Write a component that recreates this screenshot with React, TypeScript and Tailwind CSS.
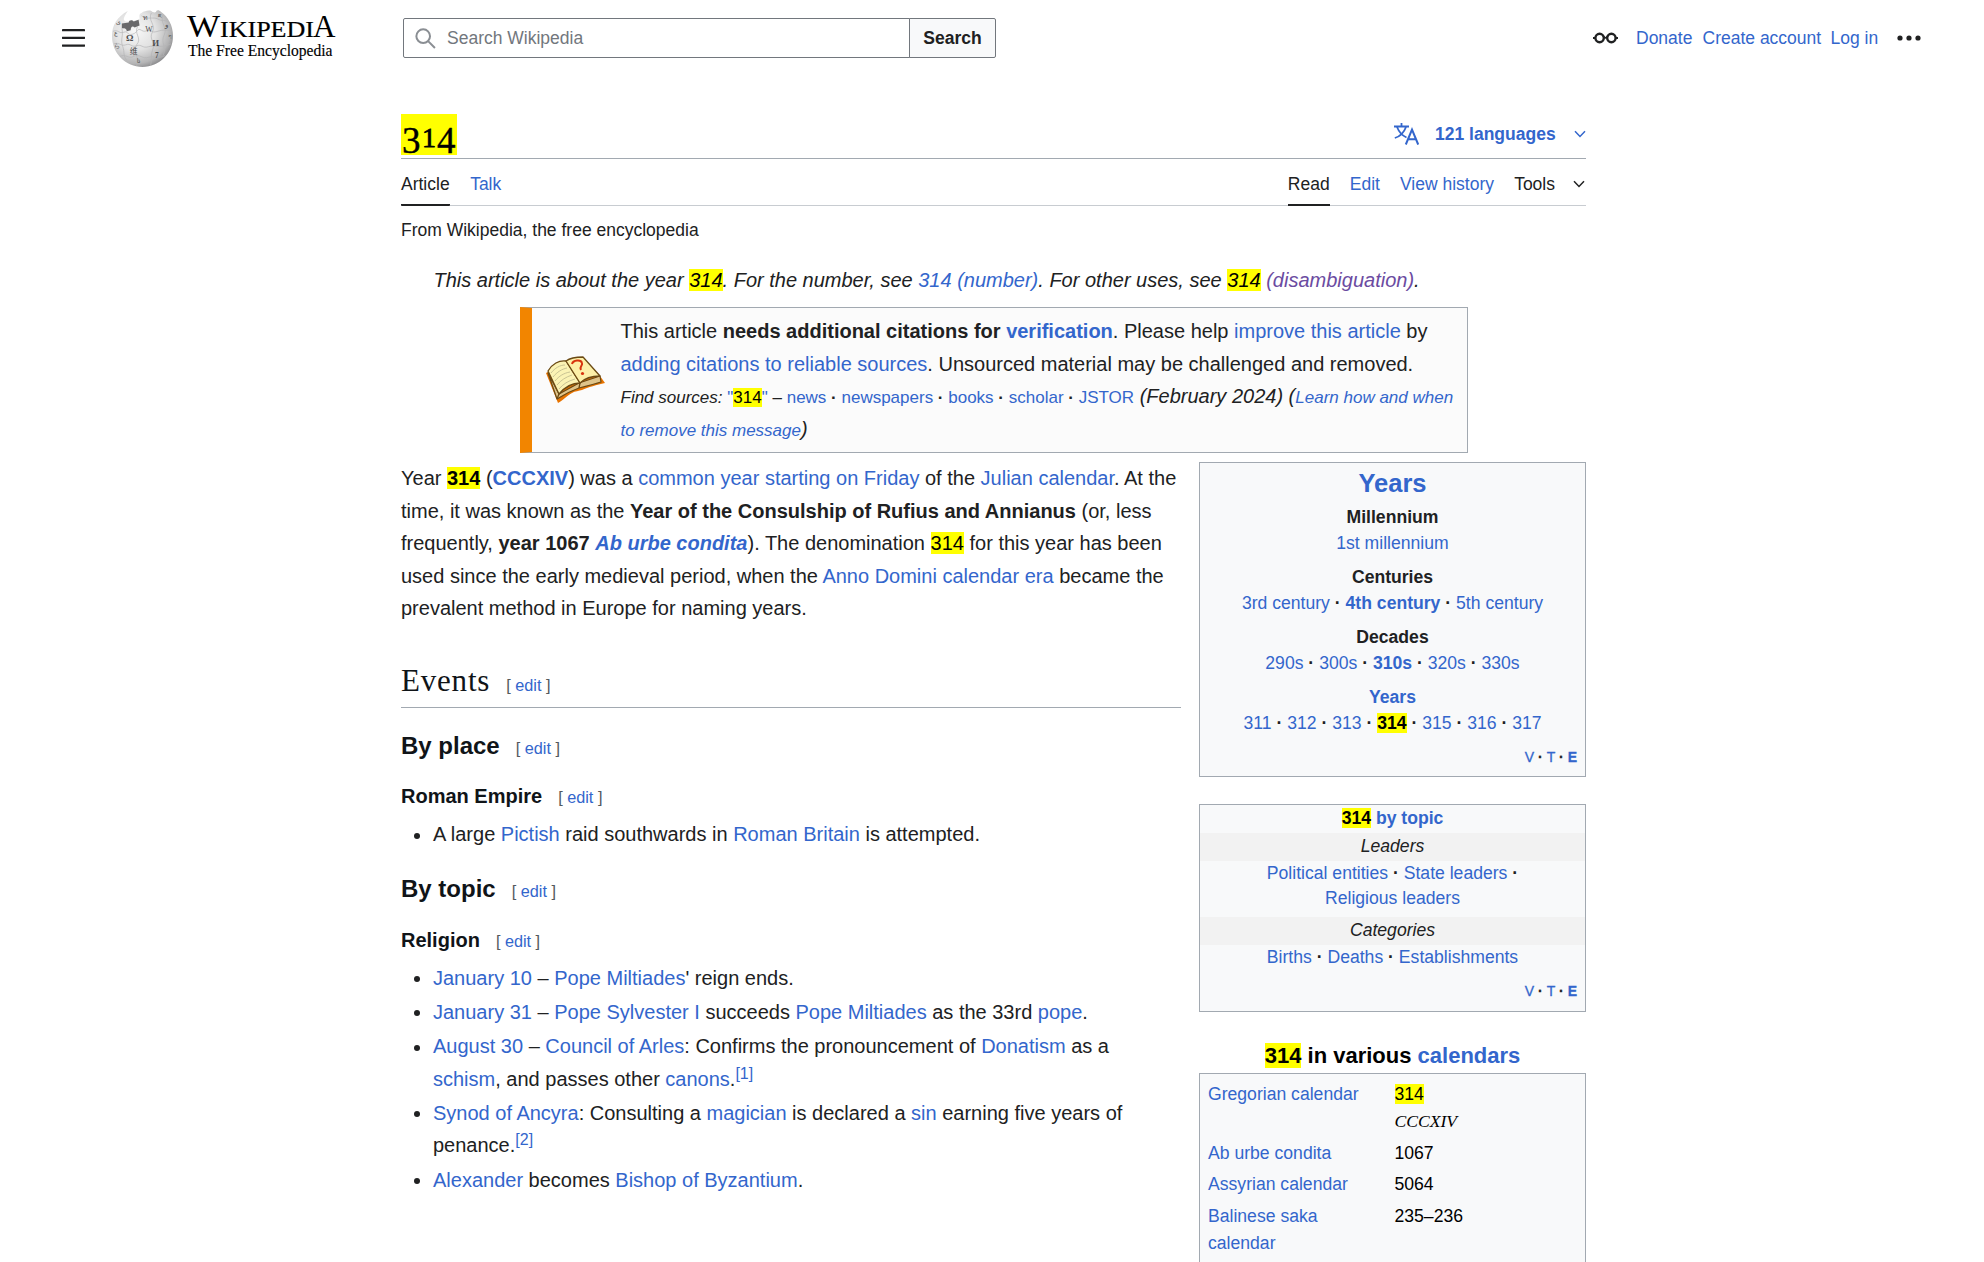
import type { ReactNode } from "react";

const A = ({ children, b = false }: { children: ReactNode; b?: boolean }) => (
  <a className={b ? "font-bold text-[#3366cc]" : "text-[#3366cc]"}>{children}</a>
);
const M = ({ children = "314" }: { children?: ReactNode }) => (
  <mark className="bg-[#ffff00] text-black">{children}</mark>
);
const Dot = () => <b className="text-[#202122]"> · </b>;

function Dots({ items }: { items: ReactNode[] }) {
  return (
    <>
      {items.map((item, i) => (
        <span key={i}>
          {i > 0 && <Dot />}
          {item}
        </span>
      ))}
    </>
  );
}

const EditLink = () => (
  <span className="font-['Liberation_Sans',sans-serif] text-[16.25px] font-normal text-[#54595d]">
    [<span className="mx-[4.5px] text-[#3366cc]">edit</span>]
  </span>
);

function Globe() {
  return (
    <svg className="mt-[3px] h-[58px] w-[63px]" viewBox="0 2 64 60" preserveAspectRatio="none">
      <defs>
        <radialGradient id="ball" cx="38%" cy="36%" r="68%">
          <stop offset="0" stopColor="#f8f8f8" />
          <stop offset="0.5" stopColor="#e2e2e2" />
          <stop offset="0.85" stopColor="#b4b4b5" />
          <stop offset="1" stopColor="#8a8a8c" />
        </radialGradient>
      </defs>
      <path
        d="M17 3 C6 9 1 18 1 29 C1 47 15 61 32 61 C49 61 63 47 63 29 C63 18 58 9 51 4 C49 2 47 2 46 3 C46 5 43 5 41 3 C38 2 34 3 31 5 C28 6 29 9 29 11 C27 13 24 12 21 14 L15 14 C11 12 14 8 17 3Z"
        fill="url(#ball)"
      />
      <path d="M11 16 L18 15 C18 12 22 12 23 14 L28 12 L29 18 L24 20 C22 18 20 19 20 23 L16 24 C16 21 13 21 11 21Z" fill="#69696b" />
      <g fill="none" stroke="#b4b4b6" strokeWidth="0.7">
        <path d="M2 24 C8 22 8 27 13 25 C18 23 16 29 22 27 C28 25 26 20 31 23 C36 26 36 21 41 24 C46 27 50 20 62 24" />
        <path d="M3 37 C9 35 10 40 15 38 C20 36 21 41 26 39 C31 37 32 42 38 40 C44 38 50 42 61 37" />
        <path d="M9 50 C15 47 18 53 23 50 C29 47 32 53 38 51 C44 49 49 53 55 49" />
        <path d="M11 21 C13 29 9 33 12 40 C14 46 12 49 16 54" />
        <path d="M27 19 C23 27 32 31 26 38 C22 45 29 49 26 60" />
        <path d="M41 5 C37 13 46 17 42 25 C38 32 46 36 42 44 C40 49 42 54 40 60" />
        <path d="M53 7 C49 15 58 20 54 28 C50 36 57 40 53 49" />
        <path d="M31 8 C37 13 43 8 49 12 C53 14 57 11 60 17" />
      </g>
      <g fill="#4d4d4f" fontFamily="Liberation Serif, serif" textAnchor="middle">
        <text x="19" y="34" fontSize="9.5" fontWeight="bold">Ω</text>
        <text x="38.5" y="25" fontSize="8">W</text>
        <text x="45.5" y="39" fontSize="9" fontWeight="bold">И</text>
        <text x="46.5" y="52" fontSize="7.5" fontWeight="bold">7</text>
        <text x="35" y="12" fontSize="7">ท</text>
        <text x="23" y="48" fontSize="8" fontFamily="Noto Sans CJK SC, sans-serif">维</text>
        <text x="5" y="28" fontSize="6">ع</text>
        <text x="6" y="41" fontSize="6">ら</text>
        <text x="8" y="17" fontSize="6">ی</text>
        <text x="50" y="10" fontSize="6">ཇ</text>
        <text x="56" y="20" fontSize="7">و</text>
        <text x="60" y="31" fontSize="6">ף</text>
        <text x="28" y="57" fontSize="6">ს</text>
      </g>
    </svg>
  );
}

function Wordmark() {
  return (
    <svg className="ml-[12px] h-[60px] w-[153px]" viewBox="0 0 153 60" fontFamily="Liberation Serif, serif" fill="#000">
      <text x="1" y="30" fontSize="31.5" textLength="33" lengthAdjust="spacingAndGlyphs">W</text>
      <text x="34" y="30" fontSize="23.5" textLength="94" lengthAdjust="spacingAndGlyphs" stroke="#000" strokeWidth="0.2">IKIPEDI</text>
      <text x="127" y="30" fontSize="31.5" textLength="22.5" lengthAdjust="spacingAndGlyphs">A</text>
      <text x="2" y="49" fontSize="16.5" textLength="144.5" lengthAdjust="spacingAndGlyphs" stroke="#000" strokeWidth="0.15">The Free Encyclopedia</text>
    </svg>
  );
}

function Book() {
  return (
    <svg className="h-[48px] w-[60px]" viewBox="0 0 60 48">
      <path d="M1 17 L13 47 C19 44 21 40 27 37 C30 35 34 35 37 34 C43 31 52 29 60 27 L55 20 L38 3 L5 15Z" fill="#e87400" />
      <path d="M3 17 L12 43 C18 39 23 36 34 32 C42 30 50 28 56 26 L55 20 L34 27 L14 38Z" fill="#dfc48a" stroke="#6b4a14" strokeWidth="1.2" strokeLinejoin="round" />
      <path d="M3 15 C7 8 14 4 21 5 L35 27 C27 27 19 32 14 38Z" fill="#fbf3b4" stroke="#6b4a14" strokeWidth="1.3" strokeLinejoin="round" />
      <path d="M21 5 C25 2 31 1 38 1 L55 20 C47 20 40 22 35 27Z" fill="#fdf0a8" stroke="#6b4a14" strokeWidth="1.3" strokeLinejoin="round" />
      <path d="M35 27 L34 32 M14 38 L12 43" stroke="#6b4a14" strokeWidth="1.3" />
      <path d="M6 17 C10 12 15 9 20 9 M8 21 C12 16 17 13 22 12 M10 25 C14 20 19 17 25 16 M12 29 C16 24 21 21 27 19 M14 33 C18 28 23 25 30 23" fill="none" stroke="#c3bd90" strokeWidth="0.9" />
      <path d="M27 8 C28 4 36 3 37 7 C38 10 34 10 36 14" fill="none" stroke="#d8330e" strokeWidth="2" />
      <circle cx="37.5" cy="17.5" r="1.6" fill="#d8330e" />
    </svg>
  );
}

const Chevron = ({ className }: { className: string }) => (
  <svg className={className} viewBox="0 0 12 8" fill="none" stroke="currentColor" strokeWidth="1.5">
    <path d="M1 1.2 L6 6.4 L11 1.2" />
  </svg>
);

function Header() {
  return (
    <header className="flex h-[76px] items-center pl-[62px] text-[17.5px]">
      <svg className="h-[18px] w-[23px]" viewBox="0 0 23 18" fill="#202122">
        <rect width="23" height="2.3" y="0" rx="0.4" />
        <rect width="23" height="2.3" y="7.7" rx="0.4" />
        <rect width="23" height="2.3" y="15.4" rx="0.4" />
      </svg>
      <div className="ml-[26px] flex h-[62px]">
        <Globe />
        <Wordmark />
      </div>
      <div className="ml-[64px] flex h-[40px] w-[593px]">
        <div className="flex w-[507px] items-center rounded-l-[2px] border border-[#72777d] pl-[11px]">
          <svg className="h-[21px] w-[21px]" viewBox="0 0 20 20" fill="none" stroke="#8a8e93" strokeWidth="1.9">
            <circle cx="7.8" cy="7.8" r="6.5" />
            <path d="M12.5 12.5 L19 19" />
          </svg>
          <span className="ml-[11px] text-[#72777d]">Search Wikipedia</span>
        </div>
        <button className="-ml-px w-[87px] rounded-r-[2px] border border-[#72777d] bg-[#f8f9fa] font-bold text-[#202122]">Search</button>
      </div>
      <nav className="ml-[597px] flex items-center whitespace-nowrap text-[#3366cc]">
        <svg className="h-[12px] w-[25px]" viewBox="0 0 25 12" fill="none" stroke="#202122" strokeWidth="2.4">
          <circle cx="6.6" cy="6" r="4.2" />
          <circle cx="18.4" cy="6" r="4.2" />
          <path d="M10 3.6 Q12.5 8 15 3.6 M0 6 H3 M22 6 H25" strokeWidth="1.8" />
        </svg>
        <a className="ml-[18px] w-[66.5px]">Donate</a>
        <a className="w-[128px]">Create account</a>
        <a className="w-[66px]">Log in</a>
        <svg className="h-[6px] w-[24px]" viewBox="0 0 24 6" fill="#202122">
          <circle cx="3" cy="3" r="2.6" />
          <circle cx="12" cy="3" r="2.6" />
          <circle cx="21" cy="3" r="2.6" />
        </svg>
      </nav>
    </header>
  );
}

function TitleBar() {
  return (
    <div className="flex h-[51px] justify-between border-b border-[#a2a9b1]">
      <h1 className="mt-[6px] flex h-[41px] w-[56px] bg-[#ffff00] pl-px font-['Liberation_Serif',serif] text-[37px] leading-[53px] text-black [-webkit-text-stroke:0.4px_black]">
        <span className="w-[19px]">3</span>
        <span className="w-[16px] text-center text-[28px] leading-[47px] [-webkit-text-stroke:0.8px_black]">1</span>
        <span className="w-[20px]">4</span>
      </h1>
      <div className="flex h-[52px] items-center text-[17.5px] font-bold text-[#3366cc]">
        <svg className="h-[22px] w-[25px]" viewBox="0 0 25 22" fill="none" stroke="currentColor" strokeWidth="2">
          <path d="M0 3.5 H15 M7.5 0 V3.5 M3 4 C5 9 8 12.5 12.5 14.5 M12 4 C10 9.5 6 13.5 0.8 15" strokeWidth="1.8" />
          <path d="M11.8 21.5 L18 6.5 L24.2 21.5 M14 16.2 H22" />
        </svg>
        <span className="ml-[16px] w-[139px]">121 languages</span>
        <Chevron className="h-[8px] w-[12px]" />
      </div>
    </div>
  );
}

function TabBar() {
  return (
    <div className="flex h-[47px] justify-between border-b border-[#c8ccd1] text-[17.5px] leading-[26px] text-[#3366cc]">
      <div className="flex gap-[20.5px]">
        <a className="-mb-px h-[47px] rounded-b-[1px] border-b-2 border-[#202122] pt-[12px] text-[#202122]">Article</a>
        <a className="pt-[12px]">Talk</a>
      </div>
      <div className="flex gap-[20.1px]">
        <a className="-mb-px h-[47px] border-b-2 border-[#202122] pt-[12px] text-[#202122]">Read</a>
        <a className="pt-[12px]">Edit</a>
        <a className="pt-[12px]">View history</a>
        <a className="flex pt-[12px] text-[#202122]">
          Tools
          <Chevron className="mt-[9px] mr-[1px] ml-[18px] h-[8px] w-[12px]" />
        </a>
      </div>
    </div>
  );
}

function Notice() {
  return (
    <div className="ml-[119px] flex h-[146px] w-[948px] items-center border border-l-[12px] border-[#a2a9b1] border-l-[#f28500] bg-[#fbfbfb] pl-[13px]">
      <Book />
      <div className="ml-[15.5px] leading-[32.5px] whitespace-nowrap">
        This article <b>needs additional citations for <A>verification</A></b>. Please help <A>improve this article</A> by
        <br />
        <A>adding citations to reliable sources</A>. Unsourced material may be challenged and removed.
        <br />
        <span className="text-[17px] leading-none">
          <i>Find sources:</i> <A>"<M />"</A> –{" "}
          <Dots items={[<A>news</A>, <A>newspapers</A>, <A>books</A>, <A>scholar</A>, <A>JSTOR</A>]} />
        </span>{" "}
        <i>
          (February 2024) (<span className="text-[17px] leading-none"><A>Learn how and when</A></span>
          <br />
          <span className="text-[17px] leading-none"><A>to remove this message</A></span>)
        </i>
      </div>
    </div>
  );
}

function Item({ children }: { children: ReactNode }) {
  return (
    <li className="flex">
      <span className="mt-[14.5px] mr-[13px] ml-[13px] h-[6px] w-[6px] shrink-0 rounded-full bg-[#202122]" />
      <span>{children}</span>
    </li>
  );
}

const Ref = ({ n }: { n: number }) => (
  <span className="relative -top-[7px] text-[16px] leading-none text-[#3366cc]">[{n}]</span>
);

function Article() {
  return (
    <article className="w-[780px] whitespace-nowrap">
      <p className="leading-[32.5px]">
        Year <b><M /></b> (<A b>CCCXIV</A>) was a <A>common year starting on Friday</A> of the <A>Julian calendar</A>. At the
        <br />
        time, it was known as the <b>Year of the Consulship of Rufius and Annianus</b> (or, less
        <br />
        frequently, <b>year 1067 <i><A>Ab urbe condita</A></i></b>). The denomination <M /> for this year has been
        <br />
        used since the early medieval period, when the <A>Anno Domini calendar era</A> became the
        <br />
        prevalent method in Europe for naming years.
      </p>
      <h2 className="mt-[36px] flex h-[47px] items-baseline gap-[16px] border-b border-[#a2a9b1] font-['Liberation_Serif',serif] text-[31px] leading-[39px] tracking-[0.8px] text-[#101418]">
        Events <span className="tracking-normal"><EditLink /></span>
      </h2>
      <h3 className="mt-[20px] flex h-[36px] items-baseline gap-[16px] text-[24px] leading-[36px] font-bold text-[#101418]">
        By place <EditLink />
      </h3>
      <h4 className="mt-[16px] flex h-[32px] items-baseline gap-[16px] leading-[32px] font-bold text-[#101418]">
        Roman Empire <EditLink />
      </h4>
      <ul className="mt-[6.5px] leading-[32.5px]">
        <Item>A large <A>Pictish</A> raid southwards in <A>Roman Britain</A> is attempted.</Item>
      </ul>
      <h3 className="mt-[20px] flex h-[36px] items-baseline gap-[16px] text-[24px] leading-[36px] font-bold text-[#101418]">
        By topic <EditLink />
      </h3>
      <h4 className="mt-[17px] flex h-[32px] items-baseline gap-[16px] leading-[32px] font-bold text-[#101418]">
        Religion <EditLink />
      </h4>
      <ul className="mt-[6px] flex flex-col gap-[1.75px] leading-[32.5px]">
        <Item><A>January 10</A> – <A>Pope Miltiades</A>' reign ends.</Item>
        <Item><A>January 31</A> – <A>Pope Sylvester I</A> succeeds <A>Pope Miltiades</A> as the 33rd <A>pope</A>.</Item>
        <Item>
          <A>August 30</A> – <A>Council of Arles</A>: Confirms the pronouncement of <A>Donatism</A> as a
          <br />
          <A>schism</A>, and passes other <A>canons</A>.<Ref n={1} />
        </Item>
        <Item>
          <A>Synod of Ancyra</A>: Consulting a <A>magician</A> is declared a <A>sin</A> earning five years of
          <br />
          penance.<Ref n={2} />
        </Item>
        <Item><A>Alexander</A> becomes <A>Bishop of Byzantium</A>.</Item>
      </ul>
    </article>
  );
}

const Vte = () => (
  <div className="flex h-[20px] justify-end gap-[3.9px] pr-[8px] text-[14px] leading-[20px] text-[#3366cc] [-webkit-text-stroke:0.3px_currentColor]">
    <span>V</span>
    <b className="text-[#202122]">·</b>
    <span>T</span>
    <b className="text-[#202122]">·</b>
    <span className="font-bold">E</span>
  </div>
);

function Group({ title, children }: { title: ReactNode; children: ReactNode }) {
  return (
    <div className="h-[60px]">
      <div className="font-bold">{title}</div>
      <div>{children}</div>
    </div>
  );
}

function CalendarRow({ label, value, className }: { label: ReactNode; value: ReactNode; className: string }) {
  return (
    <div className={className}>
      <div className="w-[186.5px] shrink-0 text-[#3366cc]">{label}</div>
      <div className="text-black">{value}</div>
    </div>
  );
}

function Sidebar() {
  return (
    <aside className="w-[387px] text-[17.6px] whitespace-nowrap">
      <section className="h-[315px] border border-[#a2a9b1] bg-[#f8f9fa] pt-px text-center leading-[26px]">
        <div className="mb-[2px] h-[38px] text-[25.5px] leading-[38px]"><A b>Years</A></div>
        <Group title="Millennium"><A>1st millennium</A></Group>
        <Group title="Centuries"><Dots items={[<A>3rd century</A>, <A b>4th century</A>, <A>5th century</A>]} /></Group>
        <Group title="Decades"><Dots items={[<A>290s</A>, <A>300s</A>, <A b>310s</A>, <A>320s</A>, <A>330s</A>]} /></Group>
        <Group title={<A>Years</A>}>
          <Dots items={[<A>311</A>, <A>312</A>, <A>313</A>, <b><M /></b>, <A>315</A>, <A>316</A>, <A>317</A>]} />
        </Group>
        <div className="mt-[3px]"><Vte /></div>
      </section>
      <section className="mt-[27px] h-[208px] border border-[#a2a9b1] bg-[#f8f9fa] text-center leading-[25px]">
        <div className="h-[28px] font-bold leading-[27px]"><M /> <A>by topic</A></div>
        <div className="h-[28px] bg-[#f2f2f2] leading-[27px] italic">Leaders</div>
        <div className="h-[56px]">
          <A>Political entities</A><Dot /><A>State leaders</A><Dot />
          <br />
          <A>Religious leaders</A>
        </div>
        <div className="h-[28px] bg-[#f2f2f2] leading-[27px] italic">Categories</div>
        <div className="h-[36px]"><Dots items={[<A>Births</A>, <A>Deaths</A>, <A>Establishments</A>]} /></div>
        <Vte />
      </section>
      <section className="mt-[28px]">
        <h2 className="h-[33px] text-center text-[22px] leading-[32px] font-bold text-black"><M /> in various <A>calendars</A></h2>
        <div className="h-[200px] border border-[#a2a9b1] bg-[#f8f9fa] pt-[7px] pl-[8px] leading-[27px]">
          <CalendarRow
            className="flex h-[59px]"
            label="Gregorian calendar"
            value={<><M /><br /><i className="font-['Liberation_Serif',serif]">CCCXIV</i></>}
          />
          <CalendarRow className="flex h-[31px]" label="Ab urbe condita" value="1067" />
          <CalendarRow className="flex h-[32px]" label="Assyrian calendar" value="5064" />
          <CalendarRow className="flex h-[59px]" label={<>Balinese saka<br />calendar</>} value="235–236" />
        </div>
      </section>
    </aside>
  );
}

export default function App() {
  return (
    <div className="h-[1262px] w-[1984px] overflow-hidden bg-white font-['Liberation_Sans',Arial,sans-serif] text-[20px] text-[#202122]">
      <Header />
      <main className="mt-[32px] ml-[401px] w-[1185px]">
        <TitleBar />
        <TabBar />
        <p className="mt-[11px] h-[26px] text-[17.5px] leading-[26px]">From Wikipedia, the free encyclopedia</p>
        <p className="mt-[21px] h-[43px] pl-[32.5px] leading-[33px] italic">
          This article is about the year <M />. For the number, see <A>314 (number)</A>. For other uses, see <M />{" "}
          <span className="text-[#6b4ba1]">(disambiguation)</span>.
        </p>
        <Notice />
        <div className="mt-[9px] flex justify-between">
          <Article />
          <Sidebar />
        </div>
      </main>
    </div>
  );
}
